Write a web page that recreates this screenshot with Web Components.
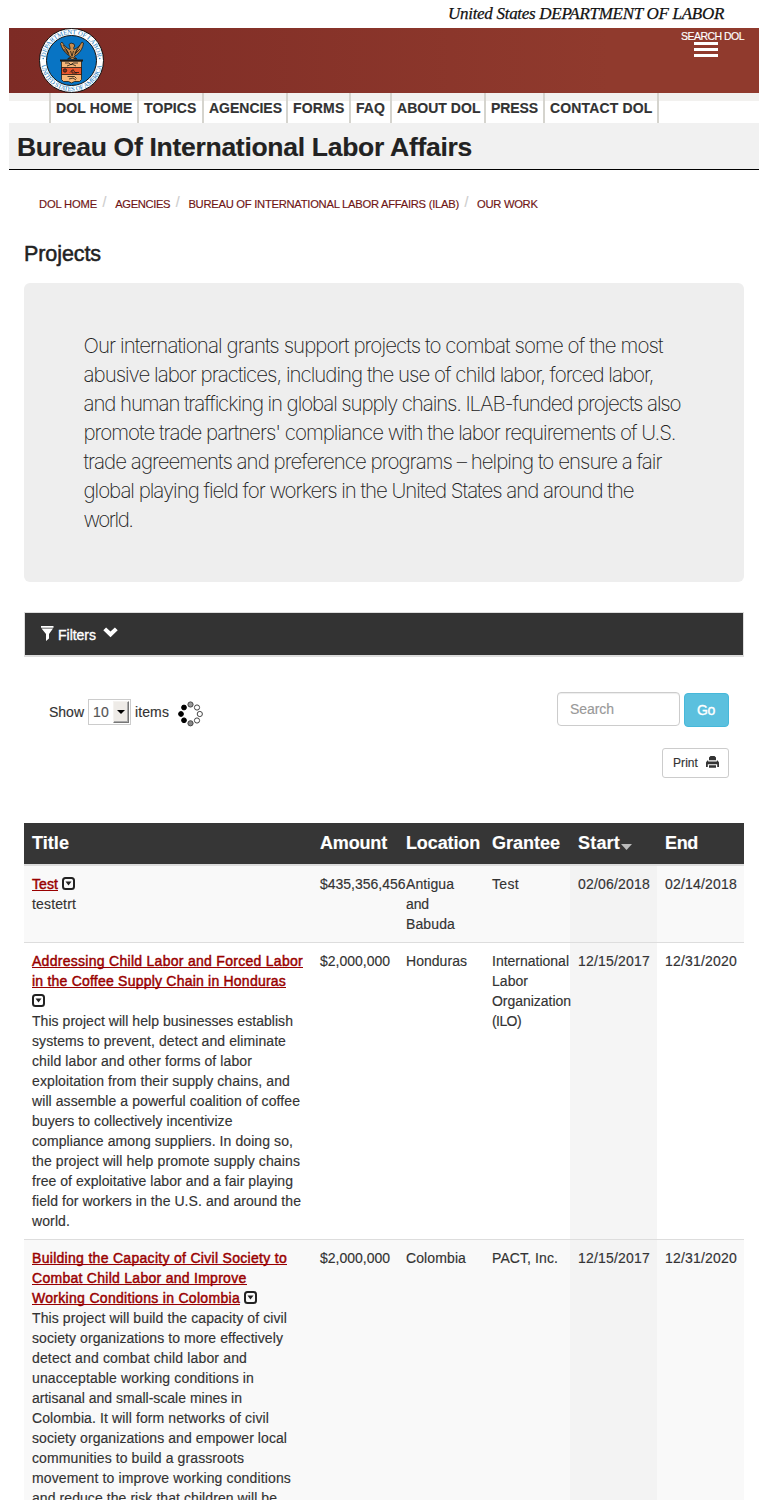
<!DOCTYPE html>
<html lang="en">
<head>
<meta charset="utf-8">
<title>Projects | U.S. Department of Labor</title>
<style>
html{background:#fff}
body{margin:0;height:1500px;overflow:hidden;font:14px/20px "Liberation Sans",Arial,sans-serif;color:#333}
</style>
</head>
<body>
<ilab-page></ilab-page>
<script>
function element(name, html, setup) {
  const tpl = document.createElement('template');
  tpl.innerHTML = html;
  customElements.define(name, class extends HTMLElement {
    constructor() {
      super();
      this.attachShadow({mode: 'open'}).append(tpl.content.cloneNode(true));
    }
    connectedCallback() { if (setup) setup(this, this.shadowRoot); }
  });
}

element('ilab-page', `
<style>
:host{display:block;width:750px;margin-left:9px;-webkit-text-stroke:.15px currentColor}
main{padding:0 15px}
h2{margin:17px 0 0;height:30px;font-weight:400;font-size:21.5px;line-height:30px;color:#222;-webkit-text-stroke:.5px #222}
lead-panel{margin-top:14px}
filter-bar{margin-top:30px}
</style>
<dol-masthead></dol-masthead>
<dol-nav></dol-nav>
<bureau-title><fit-text w="455">Bureau Of International Labor Affairs</fit-text></bureau-title>
<main>
<crumb-trail></crumb-trail>
<h2><fit-text w="77">Projects</fit-text></h2>
<lead-panel>
<fit-text w="579">Our international grants support projects to combat some of the most</fit-text><br>
<fit-text w="570">abusive labor practices, including the use of child labor, forced labor,</fit-text><br>
<fit-text w="597">and human trafficking in global supply chains. ILAB-funded projects also</fit-text><br>
<fit-text w="592">promote trade partners' compliance with the labor requirements of U.S.</fit-text><br>
<fit-text w="578">trade agreements and preference programs – helping to ensure a fair</fit-text><br>
<fit-text w="550">global playing field for workers in the United States and around the</fit-text><br>
<fit-text w="49">world.</fit-text>
</lead-panel>
<filter-bar></filter-bar>
<table-tools></table-tools>
<project-table></project-table>
</main>`);

element('dol-masthead', `
<style>
:host{display:block}
.dept{height:28px;display:flex;justify-content:flex-end;padding-right:35px;font:italic 17px/27px "Liberation Serif",serif;color:#111;-webkit-text-stroke:.25px #111}
.band{height:65px;display:flex;justify-content:space-between;align-items:flex-start;background:linear-gradient(90deg,#7d2b25,#903a2d 80%,#903a2d)}
dol-seal{margin-left:30px}
.search{margin-right:15px;width:63px;color:#fff;font-size:10.5px;line-height:14px;padding-top:1px}
.bars{width:24px;margin-left:13px;margin-top:-1px;display:grid;gap:3px}
.bars i{height:3px;background:#fff}
fit-text{display:block}
</style>
<div class="dept"><fit-text w="276">United States DEPARTMENT OF LABOR</fit-text></div>
<div class="band"><dol-seal></dol-seal>
<div class="search"><fit-text w="63">SEARCH DOL</fit-text><div class="bars"><i></i><i></i><i></i></div></div></div>`);

element('dol-seal', `
<style>:host{display:block;width:65px;height:65px}svg{display:block}text{font:6.6px "Liberation Serif",serif;fill:#1878bd}</style>
<svg width="65" height="65" viewBox="0 0 65 65">
<circle cx="32.5" cy="32.5" r="32" fill="#fff" stroke="#111"/>
<circle cx="32.5" cy="32.5" r="25" fill="#0874c4" stroke="#111"/>
<defs><path id="t" d="M6.2 32.5A26.3 26.3 0 0 1 58.8 32.5"/><path id="b" d="M1.9 32.5A30.6 30.6 0 0 0 63.1 32.5"/></defs>
<text><textPath href="#t" startOffset="3" textLength="76">DEPARTMENT OF LABOR</textPath></text>
<text><textPath href="#b" startOffset="5" textLength="86">UNITED STATES OF AMERICA</textPath></text>
<circle cx="4.2" cy="30.5" r=".7" fill="#1878bd"/><circle cx="60.8" cy="30.5" r=".7" fill="#1878bd"/>
<g stroke="#1c1a16" stroke-width=".8" stroke-linejoin="round">
<path fill="#c98d4c" d="M31 19.5l-1-3 2-1.500 3 1 .7 2-1 1.500.3 2c3-1 6-4 8-7.500l1.500 1c-.5 5-3 9-7 12l-2.500 1.500 3 2.500-3-.5-1.500 1.500-1.500-1.500-3.500.5 3-2.500-2.500-1.500c-4-3-6.500-7-7.500-11.500l1.500-1.500c2 3.500 5 6.500 8 7.500z"/>
<path fill="none" d="M24 17l5.500 8M27 21l3 6M41 17l-5 8M38.500 21l-3 6M24.500 21l5 5M41 21l-5 5M31.500 23l1.500 5 1.500-5M29 31l4-2 4 2"/>
<path fill="#f7b778" d="M22.500 33h20v18.500l-2 2h-5l-3 1.500-3-1.500h-5l-2-2z"/>
<path fill="#e9562c" d="M22.500 39.500h20v7h-20z"/>
<path stroke-width="2" d="M21 32.500h23"/>
<path fill="none" d="M26 35h4l2 2 2-2h5M28 38l5-2 4 2M28.500 48.500h7l2 2M30 51l4-1 3 2M31 44.500l3-3 2 3h4M33 42v3h5"/>
<circle cx="26" cy="42.500" r="1.700" fill="#803421"/>
</g></svg>`);

element('dol-nav', `
<style>
:host{display:flex;height:30px;padding-left:40px;background:linear-gradient(#f2f1ef 8px,#fff 8px);font-weight:700;font-size:14px;line-height:30px;color:#333}
span{box-sizing:border-box;border-left:2px solid #d5d4ce;padding-left:5px}
span:last-child{width:2px;padding:0}
</style>`, (el, root) => {
  for (const [label, cell, text] of [['DOL HOME',88,76.5],['TOPICS',65,52.5],['AGENCIES',84,73],['FORMS',63,51.5],['FAQ',41,29],['ABOUT DOL',94,83.5],['PRESS',59,47],['CONTACT DOL',114,102.5],['',2,0]]) {
    const s = document.createElement('span');
    s.style.width = cell + 'px';
    if (label) s.innerHTML = `<fit-text w="${text}">${label}</fit-text>`;
    root.append(s);
  }
});

element('bureau-title', `
<style>:host{display:block;box-sizing:border-box;height:47px;padding:1px 0 0 8px;background:#f1f1f1;border-bottom:1px solid #000;font-weight:700;font-size:26.5px;line-height:46px;color:#222}</style><slot></slot>`);

element('crumb-trail', `
<style>
:host{display:flex;height:36px;padding:16px 0 0 15px;font-size:11.2px;line-height:36px;color:#6f1515}
i{font:14px/32px "Liberation Sans";color:#ccc;width:18.200px;padding-left:5.500px;box-sizing:border-box}
</style>
<fit-text w="58">DOL HOME</fit-text><i>/</i><fit-text w="55">AGENCIES</fit-text><i>/</i><fit-text w="270.500">BUREAU OF INTERNATIONAL LABOR AFFAIRS (ILAB)</fit-text><i>/</i><fit-text w="60.5">OUR WORK</fit-text>`);

element('lead-panel', `
<style>:host{display:block;box-sizing:border-box;height:299px;padding:48px 59.500px;border-radius:6px;background:#eee;font-family:Inter,"Liberation Sans",sans-serif;font-weight:200;font-size:20.500px;line-height:29px;color:#222;-webkit-text-stroke:0}</style><slot></slot>`);

element('filter-bar', `
<style>
:host{display:flex;box-sizing:border-box;height:45px;border:1px solid #ddd;border-bottom-width:2px;background:#333;color:#fff;padding-left:16px;line-height:44px;-webkit-text-stroke:.35px #fff}
svg{stroke:none}
.f{margin:13px 4px 0 0}.c{margin:14px 0 0 7px}
</style>
<svg class="f" width="13" height="16" viewBox="0 0 13 16"><path fill="#fff" d="M0 0h12.500v1.700H0zM.5 2.400h11.500L8 8v4.500L5 15V8z"/></svg>
<fit-text w="38">Filters</fit-text>
<svg class="c" width="15" height="11" viewBox="0 0 15 11"><path fill="#fff" d="M.3 3.300L3.100.4l4.400 4.200L11.900.4l2.800 2.900-7.200 7z"/></svg>`);

element('table-tools', `
<style>
:host{display:flex;justify-content:space-between;height:166px;padding:0 15px 0 25px;box-sizing:border-box}
.left{display:flex;align-items:center;height:26px;margin-top:42px;line-height:26px}
.select{box-sizing:border-box;width:43px;height:26px;border:1px solid #ccc;margin:0 4px;display:flex;align-items:center;justify-content:space-between;padding:0 1px 0 4px;color:#555}
.drop{box-sizing:border-box;width:16px;height:22px;background:#eeebe7;border:1px solid #f4f2ef;border-right-color:#777;border-bottom-color:#777;box-shadow:inset -1px -1px #aaa;display:grid;place-items:center}
svg{display:block}.spin{margin:4px 0 0 8px}
.right{margin-top:35px;display:flex;flex-direction:column;align-items:flex-end}
.row{display:flex;gap:4px}
.input{box-sizing:border-box;width:123px;height:34px;border:1px solid #ccc;border-radius:4px;box-shadow:inset 0 1px 1px rgba(0,0,0,.075);padding-left:12px;line-height:32px;color:#999}
.go{box-sizing:border-box;width:45px;height:34px;margin-top:1px;border:1px solid #46b8da;border-radius:4px;background:#5bc0de;color:#fff;padding-left:12px;line-height:32px;-webkit-text-stroke:.35px #fff}
.print{box-sizing:border-box;width:67px;height:30px;margin-top:21px;border:1px solid #ccc;border-radius:3px;display:flex;padding-left:10px;font-size:12px;line-height:28px}
.print svg{margin:6px 0 0 8px}
</style>
<div class="left"><fit-text w="35">Show</fit-text><div class="select"><fit-text w="16">10</fit-text><div class="drop"><svg width="8" height="4" viewBox="0 0 8 4"><path d="M0 0h8L4 4z"/></svg></div></div><fit-text w="34">items</fit-text>
<svg class="spin" width="26" height="26" viewBox="0 0 26 26" stroke="#444" fill="#fff"><circle cx="13.500" cy="3.500" r="2.600" fill="#999"/><circle cx="20" cy="6.500" r="2.600"/><circle cx="22.800" cy="13" r="2.600"/><circle cx="20" cy="19.500" r="2.600"/><circle cx="13.500" cy="22.300" r="2.600" fill="#888"/><g fill="#000" stroke="#000"><circle cx="7" cy="19.300" r="2.400"/><circle cx="4" cy="13" r="2.400"/><circle cx="7" cy="6.500" r="2.400"/></g></svg></div>
<div class="right"><div class="row"><div class="input"><fit-text w="44">Search</fit-text></div><div class="go"><fit-text w="18">Go</fit-text></div></div>
<div class="print"><fit-text w="25">Print</fit-text><svg width="13" height="14" viewBox="0 0 13 14"><path fill="#333" d="M4.500 1h4l1.500 1.500V5.300H3V2.500zM0 7.500L1.300 5.500h.9v1h8.600v-1h.9L13 7.500V12h-1.800V9.300H1.800V12H0zM3 10.300h7v2.500H3z"/></svg></div></div>`);

const projects = [
  {title: [['Test',26]], desc: [['testetrt',44]], amount: ['$435,356,456',85.5], location: [['Antigua',48],['and',23],['Babuda',49]], grantee: [['Test',27]], start: '02/06/2018', end: '02/14/2018'},
  {title: [['Addressing Child Labor and Forced Labor',271],['in the Coffee Supply Chain in Honduras',254]], wrap: true,
   desc: [['This project will help businesses establish',261],['systems to prevent, detect and eliminate',254],['child labor and other forms of labor',220],['exploitation from their supply chains, and',258],['will assemble a powerful coalition of coffee',268],['buyers to collectively incentivize',200.5],['compliance among suppliers. In doing so,',261],['the project will help promote supply chains',268],['free of exploitative labor and a fair playing',261],['field for workers in the U.S. and around the',269],['world.',38]],
   amount: ['$2,000,000',70], location: [['Honduras',61]], grantee: [['International',77],['Labor',36],['Organization',79],['(ILO)',29]], start: '12/15/2017', end: '12/31/2020'},
  {title: [['Building the Capacity of Civil Society to',255],['Combat Child Labor and Improve',214.5],['Working Conditions in Colombia',208]],
   desc: [['This project will build the capacity of civil',255],['society organizations to more effectively',251],['detect and combat child labor and',215],['unacceptable working conditions in',222],['artisanal and small-scale mines in',210],['Colombia. It will form networks of civil',237],['society organizations and empower local',255],['communities to build a grassroots',212],['movement to improve working conditions',259],['and reduce the risk that children will be',245]],
   amount: ['$2,000,000',70], location: [['Colombia',60]], grantee: [['PACT, Inc.',66]], start: '12/15/2017', end: '12/31/2020'}
];
const fit = ([text, w]) => `<fit-text w="${w}">${text}</fit-text>`;
const lines = list => list.map(fit).join('<br>');

element('project-table', `
<style>
:host{display:block}
.head{display:grid;grid-template-columns:288px 86px 86px 86px 87px 87px;height:41px;background:#363636;border-bottom:2px solid #ddd;color:#fff;font-weight:700;font-size:18px;line-height:41px}
.head div{padding-left:8px;white-space:nowrap}
.head svg{margin-left:1px;vertical-align:-1px}
</style>
<div class="head"><div><fit-text w="37">Title</fit-text></div><div><fit-text w="67">Amount</fit-text></div><div><fit-text w="74">Location</fit-text></div><div><fit-text w="68">Grantee</fit-text></div><div><fit-text w="42">Start</fit-text><svg width="11" height="6" viewBox="0 0 11 6"><path fill="#bbb" d="M0 0h11L5.500 6z"/></svg></div><div><fit-text w="33">End</fit-text></div></div>`,
(el, root) => projects.forEach((p, i) => {
  const row = document.createElement('project-row');
  row.project = p;
  if (i % 2 === 0) row.className = 'odd';
  if (i === 0) row.classList.add('first');
  root.append(row);
}));

element('project-row', `
<style>
:host{display:grid;grid-template-columns:288px 86px 86px 86px 87px 87px;border-top:1px solid #ddd}
:host(.first){border-top:0}
:host(.odd){background:#f9f9f9}
div{padding:8px 0 8px 8px;white-space:nowrap;line-height:20px}
.start{background:#f5f5f5}
.grantee{z-index:1}
:host(.odd) .start{background:#f3f3f3}
a{color:#900;-webkit-text-stroke:.45px #900;--rule:1px solid #900}
svg{vertical-align:-1px}
</style>`, (el, root) => {
  const p = el.project;
  if (!p) return;
  const icon = '<svg width="13" height="13" viewBox="0 0 13 13"><rect x="1" y="1" width="11" height="11" rx="2.500" fill="none" stroke="#222" stroke-width="2"/><path fill="#222" stroke="none" d="M3.500 4.500h6L6.500 8.500z"/></svg>';
  const t = document.createElement('template');
  t.innerHTML = `<div><a>${lines(p.title)}</a>${p.wrap ? '<br>' : ' '}${icon}<br>${lines(p.desc)}</div><div>${fit(p.amount)}</div><div>${lines(p.location)}</div><div class="grantee">${lines(p.grantee)}</div><div class="start">${fit([p.start,72])}</div><div>${fit([p.end,72])}</div>`;
  root.append(t.content.cloneNode(true));
});

/* One line of text, tracked so that it fills exactly the width in "w". */
element('fit-text', `
<style>
:host{display:inline-block;white-space:nowrap;height:1lh;vertical-align:top}
span{display:inline-block;text-decoration:none}
span::after{content:"";display:block;border-top:var(--rule,0);margin-top:-4px}
</style><span><slot></slot></span>`, (el, root) => {
  const w = parseFloat(el.getAttribute('w'));
  const span = root.querySelector('span');
  const natural = span.getBoundingClientRect().width;
  span.style.letterSpacing = (w - natural) / el.textContent.length + 'px';
  el.style.width = w + 'px';
});
</script>
</body>
</html>
